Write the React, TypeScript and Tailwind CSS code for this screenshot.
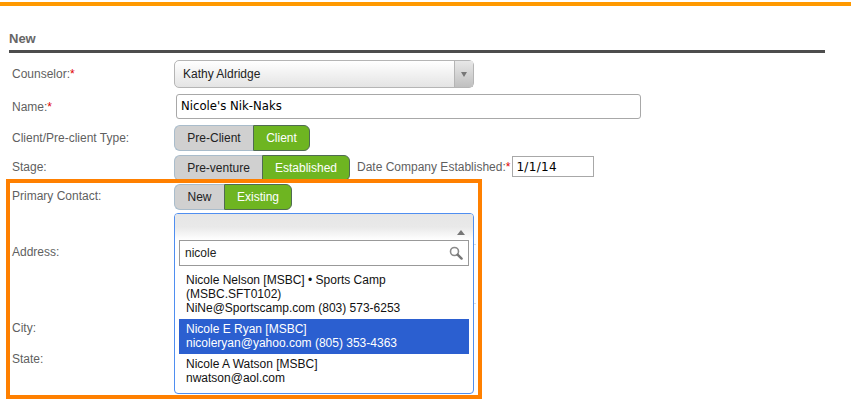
const sans = "font-['Liberation_Sans',Arial,sans-serif]"

function Toggle({ left, right, leftW, rightW }: { left: string; right: string; leftW: number; rightW: number }) {
  return (
    <div className="flex h-[26px] text-[12px]">
      <div
        className="flex items-center justify-center rounded-l-[6px] border border-r-0 border-[#a9bccb] bg-[#d0d0d0] text-[#222]"
        style={{ width: leftW }}
      >
        {left}
      </div>
      <div
        className="flex items-center justify-center rounded-r-[6px] border border-[#4f6b52] bg-[#6eb521] text-white"
        style={{ width: rightW }}
      >
        {right}
      </div>
    </div>
  )
}

function Label({ children, required }: { children: string; required?: boolean }) {
  return (
    <div className="w-[162px] shrink-0 text-[12px] text-[#5f5f5f]">
      {children}
      {required && <span className="text-[#e00000]">*</span>}
    </div>
  )
}

export default function App() {
  return (
    <div className={`relative h-[406px] w-[851px] overflow-hidden bg-white ${sans}`}>
      <div className="mt-[2px] h-[4px] bg-[#ff9900]" />

      <div className="pl-[9px] pt-[25px]">
        <div className="w-[816px] border-b-[3px] border-[#4d4d4d] pb-[4px] text-[13px] leading-[15px] font-bold text-[#666]">
          New
        </div>

        <div className="pl-[3px]">
          <div className="mt-[7px] flex h-[28px] items-center">
            <Label required>Counselor:</Label>
            <div className="flex h-[28px] w-[300px] items-stretch rounded-[5px] border border-[#b5b5b5] bg-gradient-to-b from-white to-[#e4e4e4] text-[12px] text-[#222]">
              <div className="flex flex-1 items-center pl-[8px]">Kathy Aldridge</div>
              <div className="flex w-[19px] items-center justify-center border-l border-[#b5b5b5] bg-gradient-to-b from-[#e8e8e8] to-[#c0c0c0]">
                <div className="h-0 w-0 border-x-[3px] border-t-[5px] border-x-transparent border-t-[#777]" />
              </div>
            </div>
          </div>

          <div className="mt-[6px] flex h-[25px] items-center">
            <Label required>Name:</Label>
            <div className="ml-[2px] flex h-[25px] w-[465px] items-center rounded-[3px] border border-[#a8a8a8] pl-[4px] font-['DejaVu_Sans',sans-serif] text-[11.7px] text-black">
              Nicole's Nik-Naks
            </div>
          </div>

          <div className="mt-[6px] flex h-[26px] items-start">
            <div className="pt-[4px]">
              <Label>Client/Pre-client Type:</Label>
            </div>
            <Toggle left="Pre-Client" right="Client" leftW={79} rightW={57} />
          </div>

          <div className="mt-[4px] flex h-[26px] items-start">
            <div className="pt-[3px]">
              <Label>Stage:</Label>
            </div>
            <Toggle left="Pre-venture" right="Established" leftW={88} rightW={88} />
            <div className="ml-[7px] pt-[3px] text-[12px] whitespace-nowrap text-[#5f5f5f]">
              Date Company Established:<span className="text-[#e00000]">*</span>
            </div>
            <div className="mt-[1px] ml-[2px] flex h-[21px] w-[82px] items-center border border-[#a8a8a8] pl-[3px] font-['DejaVu_Sans',sans-serif] text-[12px] tracking-[0.3px] text-black">
              1/1/14
            </div>
          </div>

          <div className="mt-[3px] flex h-[26px] items-start">
            <div className="pt-[3px]">
              <Label>Primary Contact:</Label>
            </div>
            <Toggle left="New" right="Existing" leftW={50} rightW={68} />
          </div>

          <div className="mt-[35px] text-[12px] leading-[14px] text-[#5f5f5f]">Address:</div>
          <div className="mt-[62px] text-[12px] leading-[14px] text-[#5f5f5f]">City:</div>
          <div className="mt-[17px] text-[12px] leading-[14px] text-[#5f5f5f]">State:</div>
        </div>
      </div>

      {/* inputs peeking out from behind the dropdown */}
      <div className="absolute top-[244px] left-[470px] h-px w-[6px] bg-[#ddd]" />
      <div className="absolute top-[303px] left-[470px] h-px w-[6px] bg-[#ddd]" />

      {/* open contact dropdown */}
      <div className="absolute top-[213px] left-[174px] h-[181px] w-[300px] rounded-[4px] border border-[#4f8ef0] bg-white text-[12px] leading-[14px] text-[#111]">
        <div className="flex h-[26px] items-end justify-end rounded-t-[3px] bg-gradient-to-b from-[#e6e6e6] via-[#e9e9e9] to-white pr-[8px] pb-[5px]">
          <div className="h-0 w-0 border-x-[4px] border-b-[5px] border-x-transparent border-b-[#777]" />
        </div>
        <div className="mx-[4px] flex h-[26px] items-center justify-between border border-[#999] pr-[5px] pl-[5px] text-[12px] text-[#222]">
          nicole
          <svg width="14" height="14" viewBox="0 0 14 14" fill="none">
            <circle cx="5.5" cy="5.5" r="4" stroke="#8a8a8a" strokeWidth="1.6" />
            <path d="M8.6 8.6 L12.6 12.6" stroke="#777" strokeWidth="2.4" strokeLinecap="round" />
          </svg>
        </div>
        <div className="mx-[4px] mt-[2px]">
          <div className="px-[7px] pt-[5px] pb-[2px]">
            <div>Nicole Nelson [MSBC] • Sports Camp</div>
            <div>(MSBC.SFT0102)</div>
            <div>NiNe@Sportscamp.com (803) 573-6253</div>
          </div>
          <div className="mt-[2px] bg-[#2b5fd0] px-[7px] pt-[3px] pb-[4px] text-white">
            <div>Nicole E Ryan [MSBC]</div>
            <div>nicoleryan@yahoo.com (805) 353-4363</div>
          </div>
          <div className="px-[7px] pt-[3px]">
            <div>Nicole A Watson [MSBC]</div>
            <div>nwatson@aol.com</div>
          </div>
        </div>
      </div>

      {/* annotation frame */}
      <div className="pointer-events-none absolute top-[179px] left-[6px] h-[220px] w-[476px] border-[4px] border-[#ff8000]" />
    </div>
  )
}
